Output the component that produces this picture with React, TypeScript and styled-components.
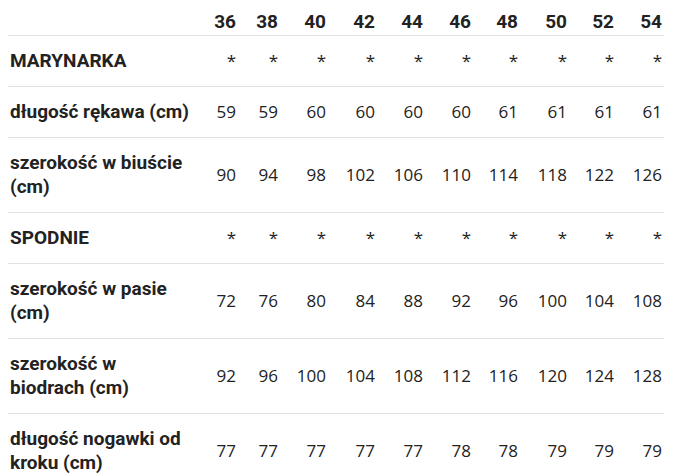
import React from 'react';
import styled, { createGlobalStyle } from 'styled-components';

const sizes = ['36', '38', '40', '42', '44', '46', '48', '50', '52', '54'];
const colWidths = [194, 36, 42, 48, 49, 48, 48, 47, 49, 47, 48];

interface RowData {
  label: string;
  values: string[];
  section?: boolean;
}

const star = sizes.map(() => '*');

const rows: RowData[] = [
  { label: 'MARYNARKA', values: star, section: true },
  {
    label: 'długość rękawa (cm)',
    values: ['59', '59', '60', '60', '60', '60', '61', '61', '61', '61'],
  },
  {
    label: 'szerokość w biuście (cm)',
    values: ['90', '94', '98', '102', '106', '110', '114', '118', '122', '126'],
  },
  { label: 'SPODNIE', values: star, section: true },
  {
    label: 'szerokość w pasie (cm)',
    values: ['72', '76', '80', '84', '88', '92', '96', '100', '104', '108'],
  },
  {
    label: 'szerokość w biodrach (cm)',
    values: ['92', '96', '100', '104', '108', '112', '116', '120', '124', '128'],
  },
  {
    label: 'długość nogawki od kroku (cm)',
    values: ['77', '77', '77', '77', '77', '78', '78', '79', '79', '79'],
  },
];

const GlobalStyle = createGlobalStyle`
  html, body {
    margin: 0;
    background: #ffffff;
  }
  body {
    padding: 0 0 0 8px;
    color: #222222;
  }
`;

const SizeTable = styled.table`
  border-collapse: collapse;
  table-layout: fixed;
  width: 654px;
`;

const HeadCell = styled.th`
  font-family: Roboto, 'Liberation Sans', sans-serif;
  font-weight: 700;
  font-size: 19px;
  line-height: 24px;
  text-align: right;
  padding: 10px 2px 1px 0;
  border-bottom: 1px solid #e2e2e2;
  color: #222222;
`;

const Row = styled.tr`
  border-bottom: 1px solid #e2e2e2;
`;

const LabelCell = styled.td`
  font-family: Roboto, 'Liberation Sans', sans-serif;
  font-weight: 700;
  font-size: 19px;
  line-height: 24px;
  text-align: left;
  padding: 13px 10px 13px 2px;
  vertical-align: middle;
`;

const ValueCell = styled.td`
  font-family: 'Open Sans', 'Liberation Sans', sans-serif;
  font-weight: 400;
  font-size: 17px;
  line-height: 24px;
  text-align: right;
  padding: 13px 2px 13px 0;
  vertical-align: middle;
  white-space: nowrap;
`;

export default function App() {
  return (
    <>
      <GlobalStyle />
      <SizeTable>
        <colgroup>
          {colWidths.map((w, i) => (
            <col key={i} style={{ width: w }} />
          ))}
        </colgroup>
        <thead>
          <tr>
            <HeadCell />
            {sizes.map((s) => (
              <HeadCell key={s}>{s}</HeadCell>
            ))}
          </tr>
        </thead>
        <tbody>
          {rows.map((r) => (
            <Row key={r.label}>
              <LabelCell>{r.label}</LabelCell>
              {r.values.map((v, i) => (
                <ValueCell key={i}>{v}</ValueCell>
              ))}
            </Row>
          ))}
        </tbody>
      </SizeTable>
    </>
  );
}
